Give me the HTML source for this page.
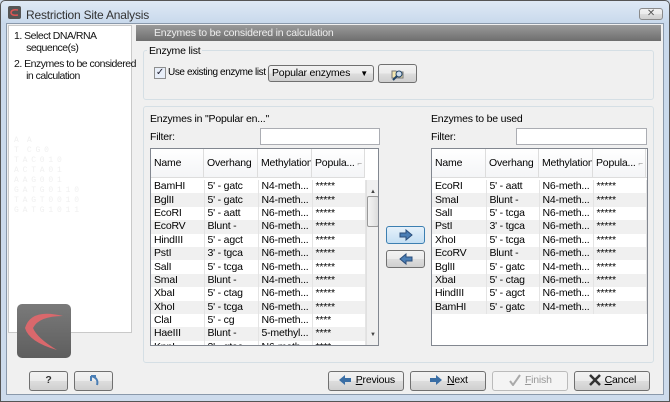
<!DOCTYPE html><html><head><style>
*{margin:0;padding:0;box-sizing:border-box}
body{width:670px;height:402px;overflow:hidden;background:#cfdcec;font-family:"Liberation Sans",sans-serif;font-size:10.5px;letter-spacing:-0.2px;color:#000;position:relative}
.a{position:absolute;white-space:nowrap}
.win{left:0;top:0;width:670px;height:402px;border:1px solid #555;border-radius:5px 5px 0 0;background:linear-gradient(#dfe9f5,#c9d9ec 22px,#cddbec)}
.frame{left:6px;top:23px;width:658px;height:372px;background:#f0f0f0;border:1px solid #8a99ab}
.btn{position:absolute;border:1px solid #707070;border-radius:3px;background:linear-gradient(#f2f2f2,#ebebeb 50%,#dddddd 51%,#cfcfcf);text-align:center;line-height:17px;white-space:nowrap}
.btn svg{vertical-align:middle}
.grp{position:absolute;border:1px solid #d5dfe5;border-radius:3px}
table{border-collapse:collapse;table-layout:fixed}
td{height:13.4px;padding:0 3px;white-space:nowrap;overflow:hidden;border-right:1px solid #e4e4e4;line-height:13px}
tr:nth-child(even) td{background:#f0f0f0}
.hd{position:absolute;height:29px;background:linear-gradient(#fff,#f4f5f7);border-bottom:1px solid #ddd;display:flex}
.hd div{border-right:1px solid #ddd;line-height:29px;padding-left:3px;white-space:nowrap;overflow:hidden}
.inp{position:absolute;background:#fff;border:1px solid #abadb3}
</style></head><body>
<div class="a win"></div>
<div class="a" style="left:8px;top:6px;width:13px;height:13px;background:#555;border-radius:2px"><svg width="13" height="13"><path d="M10 4 Q3 3 3 7 Q4 10 10 9" stroke="#d55" stroke-width="1.5" fill="none"/></svg></div>
<div class="a" style="left:26px;top:8px;font-size:12px;color:#333">Restriction Site Analysis</div>
<div class="btn" style="left:639px;top:8px;width:24px;height:12px;line-height:10px;font-size:10px;color:#555;border-color:#8a8a8a">✕</div>
<div class="a frame"></div>
<div class="a" style="left:8px;top:25px;width:124px;height:308px;background:#fff;border:1px solid #c9c9c9;letter-spacing:-0.5px">
<div class="a" style="left:5px;top:4px;line-height:12px;color:#111">1. Select DNA/RNA<br>&nbsp;&nbsp;&nbsp;&nbsp;&nbsp;sequence(s)</div>
<div class="a" style="left:5px;top:32px;line-height:12px;color:#111">2. Enzymes to be considered<br>&nbsp;&nbsp;&nbsp;&nbsp;&nbsp;in calculation</div>
<div class="a" style="left:5px;top:110px;width:105px;height:150px;font-family:'Liberation Mono';font-size:8px;color:#f0f0f0;line-height:10px">A&nbsp;&nbsp;A<br>T&nbsp;&nbsp;C&nbsp;G&nbsp;0<br>T&nbsp;A&nbsp;C&nbsp;0&nbsp;1&nbsp;0<br>A&nbsp;C&nbsp;T&nbsp;A&nbsp;0&nbsp;1<br>A&nbsp;A&nbsp;G&nbsp;0&nbsp;0&nbsp;1<br>G&nbsp;A&nbsp;T&nbsp;G&nbsp;0&nbsp;1&nbsp;1&nbsp;0<br>T&nbsp;A&nbsp;G&nbsp;T&nbsp;0&nbsp;0&nbsp;1&nbsp;0<br>G&nbsp;A&nbsp;T&nbsp;G&nbsp;1&nbsp;0&nbsp;1&nbsp;1</div>
<div class="a" style="left:8px;top:278px;width:54px;height:54px;background:linear-gradient(#7a7a7a,#5e5e5e);border-radius:5px"><svg width="54" height="54"><path d="M46 12 Q14 4 8 24 Q12 38 40 46 Q20 34 16 24 Q22 12 46 12Z" fill="#d9686c"/></svg></div>
</div>
<div class="a" style="left:136px;top:25px;width:525px;height:16px;background:linear-gradient(#9a9a9a,#6e6e6e);color:#eee;padding-left:18px;line-height:16px">Enzymes to be considered in calculation</div>
<div class="a" style="left:136px;top:41px;width:525px;height:292px;background:#f0f0f0"></div>
<div class="grp" style="left:143px;top:50px;width:511px;height:50px"></div>
<div class="a" style="left:147px;top:45px;background:#f0f0f0;padding:0 2px">Enzyme list</div>
<div class="a" style="left:154px;top:67px;width:12px;height:12px;border:1px solid #8e8f8f;background:#e8eef8;font-size:10px;line-height:10px;text-align:center;color:#223">✓</div>
<div class="a" style="left:168px;top:67px;font-size:10px;letter-spacing:-0.4px">Use existing enzyme list</div>
<div class="btn" style="left:268px;top:65px;width:106px;height:17px;text-align:left;padding-left:3px;line-height:15px">Popular enzymes<span style="position:absolute;right:5px;font-size:8px">▼</span></div>
<div class="btn" style="left:378px;top:64px;width:39px;height:19px"><svg width="18" height="16" style="margin-top:1px"><path d="M3 5h4l1 1h6v6H3z" fill="#f4e7b0" stroke="#777"/><circle cx="10" cy="8" r="3" fill="#cde" stroke="#246"/><path d="M8 10l-4 4" stroke="#246" stroke-width="2"/></svg></div>
<div class="grp" style="left:143px;top:106px;width:511px;height:257px"></div>
<div class="a" style="left:150px;top:113px">Enzymes in "Popular en..."</div>
<div class="a" style="left:150px;top:131px">Filter:</div>
<div class="inp" style="left:260px;top:128px;width:120px;height:17px"></div>
<div class="a" style="left:431px;top:113px">Enzymes to be used</div>
<div class="a" style="left:431px;top:131px">Filter:</div>
<div class="inp" style="left:516px;top:128px;width:131px;height:17px"></div>
<div class="a" style="left:150px;top:148px;width:229px;height:198px;background:#fff;border:1px solid #828790;overflow:hidden">
<div class="hd" style="left:0;top:0;width:214px"><div style="width:53px">Name</div><div style="width:54px">Overhang</div><div style="width:54px">Methylation</div><div style="width:53px">Popula... <span style="color:#999;font-size:8px">⌐</span></div></div>
<table class="a" style="left:0;top:31px;width:214px"><colgroup><col style="width:53px"><col style="width:54px"><col style="width:54px"><col style="width:53px"></colgroup>
<tr><td>BamHI</td><td>5' - gatc</td><td>N4-meth...</td><td>*****</td></tr>
<tr><td>BglII</td><td>5' - gatc</td><td>N4-meth...</td><td>*****</td></tr>
<tr><td>EcoRI</td><td>5' - aatt</td><td>N6-meth...</td><td>*****</td></tr>
<tr><td>EcoRV</td><td>Blunt -</td><td>N6-meth...</td><td>*****</td></tr>
<tr><td>HindIII</td><td>5' - agct</td><td>N6-meth...</td><td>*****</td></tr>
<tr><td>PstI</td><td>3' - tgca</td><td>N6-meth...</td><td>*****</td></tr>
<tr><td>SalI</td><td>5' - tcga</td><td>N6-meth...</td><td>*****</td></tr>
<tr><td>SmaI</td><td>Blunt -</td><td>N4-meth...</td><td>*****</td></tr>
<tr><td>XbaI</td><td>5' - ctag</td><td>N6-meth...</td><td>*****</td></tr>
<tr><td>XhoI</td><td>5' - tcga</td><td>N6-meth...</td><td>*****</td></tr>
<tr><td>ClaI</td><td>5' - cg</td><td>N6-meth...</td><td>****</td></tr>
<tr><td>HaeIII</td><td>Blunt -</td><td>5-methyl...</td><td>****</td></tr>
<tr><td>KpnI</td><td>3' - gtac</td><td>N6-meth...</td><td>****</td></tr>
</table>
<div class="a" style="left:215px;top:31px;width:13px;height:166px;background:#f0f0f0;border-left:1px solid #e0e0e0"><div class="a" style="left:3px;top:9px;font-size:6px;color:#444">▲</div><div class="a" style="left:0;top:16px;width:12px;height:31px;border:1px solid #999;border-radius:2px;background:linear-gradient(90deg,#f4f4f4,#ddd)"></div><div class="a" style="left:3px;top:152px;font-size:6px;color:#444">▼</div></div>
</div>
<div class="a" style="left:431px;top:148px;width:217px;height:198px;background:#fff;border:1px solid #828790;overflow:hidden">
<div class="hd" style="left:0;top:0;width:215px"><div style="width:54px">Name</div><div style="width:53px">Overhang</div><div style="width:54px">Methylation</div><div style="width:53px">Popula... <span style="color:#999;font-size:8px">⌐</span></div></div>
<table class="a" style="left:0;top:31px;width:214px"><colgroup><col style="width:54px"><col style="width:53px"><col style="width:54px"><col style="width:53px"></colgroup>
<tr><td>EcoRI</td><td>5' - aatt</td><td>N6-meth...</td><td>*****</td></tr>
<tr><td>SmaI</td><td>Blunt -</td><td>N4-meth...</td><td>*****</td></tr>
<tr><td>SalI</td><td>5' - tcga</td><td>N6-meth...</td><td>*****</td></tr>
<tr><td>PstI</td><td>3' - tgca</td><td>N6-meth...</td><td>*****</td></tr>
<tr><td>XhoI</td><td>5' - tcga</td><td>N6-meth...</td><td>*****</td></tr>
<tr><td>EcoRV</td><td>Blunt -</td><td>N6-meth...</td><td>*****</td></tr>
<tr><td>BglII</td><td>5' - gatc</td><td>N4-meth...</td><td>*****</td></tr>
<tr><td>XbaI</td><td>5' - ctag</td><td>N6-meth...</td><td>*****</td></tr>
<tr><td>HindIII</td><td>5' - agct</td><td>N6-meth...</td><td>*****</td></tr>
<tr><td>BamHI</td><td>5' - gatc</td><td>N4-meth...</td><td>*****</td></tr>
</table>
</div>
<div class="btn" style="left:386px;top:226px;width:39px;height:18px;background:linear-gradient(#e6f1fa,#c4dff3);border-color:#3c7fb1"><svg width="16" height="12"><path d="M2 4h6V1l6 5-6 5V8H2z" fill="#4a7eb5" stroke="#2a4d7a"/></svg></div>
<div class="btn" style="left:386px;top:250px;width:39px;height:18px"><svg width="16" height="12"><path d="M14 4H8V1L2 6l6 5V8h6z" fill="#4a7eb5" stroke="#2a4d7a"/></svg></div>
<div class="btn" style="left:29px;top:371px;width:39px;height:20px;font-weight:bold;color:#333">?</div>
<div class="btn" style="left:74px;top:371px;width:39px;height:20px"><svg width="14" height="14"><path d="M4 3 L4 8 M4 3 L9 3 M4 3 Q12 5 10 12" stroke="#4a7eb5" stroke-width="2" fill="none"/></svg></div>
<div class="btn" style="left:328px;top:371px;width:76px;height:20px"><svg width="16" height="12"><path d="M14 4H8V1L2 6l6 5V8h6z" fill="#3a6ea5"/></svg> <u>P</u>revious</div>
<div class="btn" style="left:410px;top:371px;width:76px;height:20px"><svg width="16" height="12"><path d="M2 4h6V1l6 5-6 5V8H2z" fill="#3a6ea5"/></svg> <u>N</u>ext</div>
<div class="btn" style="left:492px;top:371px;width:76px;height:20px;color:#999;border-color:#bbb;background:#f4f4f4"><svg width="14" height="12"><path d="M2 7l3 4 7-10" stroke="#aaa" stroke-width="2" fill="none"/></svg> <u>F</u>inish</div>
<div class="btn" style="left:574px;top:371px;width:76px;height:20px"><svg width="14" height="12"><path d="M2 1l10 10M12 1L2 11" stroke="#333" stroke-width="2.5"/></svg> <u>C</u>ancel</div>
</body></html>
